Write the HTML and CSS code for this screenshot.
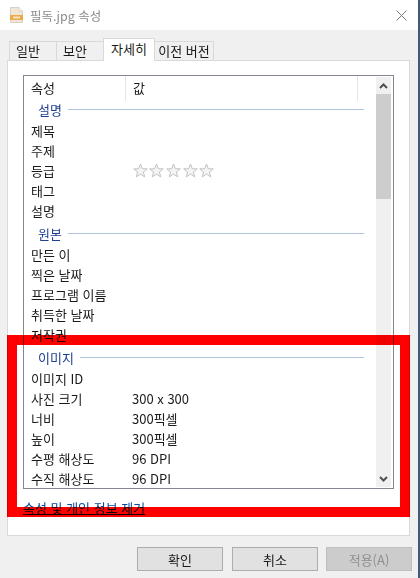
FILE: index.html
```html
<!DOCTYPE html>
<html lang="ko">
<head>
    <meta charset="UTF-8">
    <meta name="viewport" content="width=device-width, initial-scale=1.0">
    <title>필독.jpg 속성</title>
    <link rel="stylesheet" href="styles.css">
</head>
<body>
    <div class="window">
        <header class="titlebar">
            <svg class="file-icon" width="15" height="16" viewBox="0 0 15 16">
                <path d="M1.5 .5H10L13.5 4V15.5H1.5Z" fill="#f1e6d6" stroke="#d9cfc2"/>
                <path d="M10 .5V4H13.5" fill="#fff" stroke="#d9cfc2"/>
                <rect x="1" y="8" width="13" height="5" fill="#eba94a"/>
                <rect x="4" y="9.5" width="7" height="2" fill="#f8e3c0"/>
            </svg>
            <span class="title">필독.jpg 속성</span>
            <svg class="close" width="11" height="11" viewBox="0 0 11 11">
                <path d="M.5 .5L10.5 10.5M10.5 .5L.5 10.5" stroke="#7a7a7a" fill="none"/>
            </svg>
        </header>

        <nav class="tabs">
            <div class="tab short">일반</div>
            <div class="tab short">보안</div>
            <div class="tab active">자세히</div>
            <div class="tab">이전 버전</div>
        </nav>

        <section class="panel">
            <div class="list">
                <div class="rows">
                    <div class="head">
                        <div class="col-name">속성</div>
                        <div class="col-value">값</div>
                    </div>

                    <div class="group"><span>설명</span></div>
                    <div class="row"><div class="col-name">제목</div></div>
                    <div class="row"><div class="col-name">주제</div></div>
                    <div class="row">
                        <div class="col-name">등급</div>
                        <div class="stars">
                            <svg width="15" height="15" viewBox="0 0 15 15"><path class="star" d="M7.5 1L9.3 5.7L14.3 5.9L10.4 9L11.7 13.9L7.5 11.1L3.3 13.9L4.6 9L.7 5.9L5.7 5.7Z"/></svg>
                            <svg width="15" height="15" viewBox="0 0 15 15"><path class="star" d="M7.5 1L9.3 5.7L14.3 5.9L10.4 9L11.7 13.9L7.5 11.1L3.3 13.9L4.6 9L.7 5.9L5.7 5.7Z"/></svg>
                            <svg width="15" height="15" viewBox="0 0 15 15"><path class="star" d="M7.5 1L9.3 5.7L14.3 5.9L10.4 9L11.7 13.9L7.5 11.1L3.3 13.9L4.6 9L.7 5.9L5.7 5.7Z"/></svg>
                            <svg width="15" height="15" viewBox="0 0 15 15"><path class="star" d="M7.5 1L9.3 5.7L14.3 5.9L10.4 9L11.7 13.9L7.5 11.1L3.3 13.9L4.6 9L.7 5.9L5.7 5.7Z"/></svg>
                            <svg width="15" height="15" viewBox="0 0 15 15"><path class="star" d="M7.5 1L9.3 5.7L14.3 5.9L10.4 9L11.7 13.9L7.5 11.1L3.3 13.9L4.6 9L.7 5.9L5.7 5.7Z"/></svg>
                        </div>
                    </div>
                    <div class="row"><div class="col-name">태그</div></div>
                    <div class="row"><div class="col-name">설명</div></div>

                    <div class="group"><span>원본</span></div>
                    <div class="row"><div class="col-name">만든 이</div></div>
                    <div class="row"><div class="col-name">찍은 날짜</div></div>
                    <div class="row"><div class="col-name">프로그램 이름</div></div>
                    <div class="row"><div class="col-name">취득한 날짜</div></div>
                    <div class="row"><div class="col-name">저작권</div></div>

                    <div class="group"><span>이미지</span></div>
                    <div class="row"><div class="col-name">이미지 ID</div></div>
                    <div class="row"><div class="col-name">사진 크기</div><div class="col-value">300 x 300</div></div>
                    <div class="row"><div class="col-name">너비</div><div class="col-value">300픽셀</div></div>
                    <div class="row"><div class="col-name">높이</div><div class="col-value">300픽셀</div></div>
                    <div class="row"><div class="col-name">수평 해상도</div><div class="col-value">96 DPI</div></div>
                    <div class="row"><div class="col-name">수직 해상도</div><div class="col-value">96 DPI</div></div>
                </div>
                <div class="scrollbar">
                    <div class="arrow">
                        <svg width="9" height="6" viewBox="0 0 9 6"><path d="M1 5L4.5 1.5L8 5" fill="none" stroke="#505050" stroke-width="2"/></svg>
                    </div>
                    <div class="thumb"></div>
                    <div class="track"></div>
                    <div class="arrow">
                        <svg width="9" height="6" viewBox="0 0 9 6"><path d="M1 1L4.5 4.5L8 1" fill="none" stroke="#505050" stroke-width="2"/></svg>
                    </div>
                </div>
            </div>
            <a class="remove-link" href="#">속성 및 개인 정보 제거</a>
        </section>

        <footer class="buttons">
            <button class="btn">확인</button>
            <button class="btn">취소</button>
            <button class="btn disabled">적용(A)</button>
        </footer>

        <div class="highlight"></div>
    </div>
</body>
</html>
```

FILE: styles.css
```css
html, body {
    margin: 0;
    padding: 0;
}
body {
    font-family: "Noto Sans CJK KR", "Noto Sans", sans-serif;
    font-size: 13px;
    color: #1a1a1a;
    overflow: hidden;
}
.window {
    position: relative;
    width: 418px;
    height: 578px;
    background-color: #f0f0f0;
    border-right: 2px solid #3d5a78;
}
.titlebar {
    display: flex;
    align-items: center;
    height: 30px;
    padding: 0 8px 0 9px;
    background-color: #fff;
}
.file-icon {
    margin-right: 6px;
}
.title {
    flex: 1;
    color: #8c8c8c;
    font-size: 12.5px;
}
.close {
    margin-right: 3px;
}
.tabs {
    display: flex;
    height: 21px;
    margin-top: 9px;
    padding-left: 9px;
    align-items: flex-end;
}
.tab {
    box-sizing: border-box;
    display: flex;
    align-items: center;
    justify-content: center;
    height: 19px;
    width: 48px;
    padding-bottom: 2px;
    background-color: #f0f0f0;
    border: 1px solid #d9d9d9;
    border-bottom: none;
    margin-right: -1px;
}
.tab.short {
    padding-right: 10px;
}
.tab:last-child {
    width: 60px;
}
.tab.active {
    height: 23px;
    width: 52px;
    background-color: #fff;
    z-index: 1;
    margin-bottom: -1px;
    padding-bottom: 4px;
}
.panel {
    box-sizing: border-box;
    width: 403px;
    height: 476px;
    margin-left: 7px;
    padding: 14px 15px 0;
    background-color: #fff;
    border: 1px solid #d9d9d9;
}
.list {
    box-sizing: border-box;
    display: flex;
    width: 371px;
    height: 414px;
    border: 1px solid #828790;
    overflow: hidden;
}
.rows {
    flex: 1;
    min-width: 0;
}
.head, .row {
    display: flex;
    align-items: center;
    height: 20px;
}
.head {
    height: 25px;
    margin-bottom: -5px;
    align-items: flex-start;
}
.head .col-name, .head .col-value {
    height: 25px;
    line-height: 24px;
}
.head .col-value {
    flex: 0 0 233px;
    border-left: 1px solid #e5e5e5;
    border-right: 1px solid #e5e5e5;
    box-sizing: border-box;
    padding-left: 7px;
}
.col-name {
    box-sizing: border-box;
    flex: 0 0 101px;
    padding-left: 7px;
    white-space: nowrap;
}
.col-value {
    padding-left: 7px;
    white-space: nowrap;
}
.stars {
    display: flex;
    gap: 1.7px;
    padding-left: 7.5px;
}
.star {
    fill: #f4f4f4;
    stroke: #c2c2c2;
}
.group {
    box-sizing: border-box;
    display: flex;
    align-items: center;
    height: 24px;
    padding: 2px 12px 0 14px;
    color: #1f3f8f;
}
.group span {
    margin-right: 6px;
}
.group::after {
    content: "";
    flex: 1;
    height: 1px;
    background-color: #b0c4de;
}
.scrollbar {
    display: flex;
    flex-direction: column;
    flex: 0 0 15px;
    margin: 1px 2px 1px 0;
    background-color: #f0f0f0;
}
.arrow {
    display: flex;
    align-items: center;
    justify-content: center;
    height: 17px;
}
.thumb {
    height: 105px;
    background-color: #cdcdcd;
}
.track {
    flex: 1;
}
.remove-link {
    display: block;
    width: max-content;
    margin-top: 11px;
    color: #0b4a9e;
    text-decoration: underline;
    line-height: 16px;
}
.buttons {
    display: flex;
    justify-content: flex-end;
    gap: 8px;
    padding: 11px 6px 0 0;
}
.btn {
    box-sizing: border-box;
    width: 86px;
    height: 24px;
    padding: 0;
    font-family: inherit;
    font-size: 13px;
    color: #1a1a1a;
    background-color: #e1e1e1;
    border: 1px solid #adadad;
}
.btn:first-child {
    margin-right: 1px;
}
.btn.disabled {
    color: #8f8f8f;
    background-color: #cccccc;
    border-color: #bfbfbf;
}
/* 빨간 표시: 아래 글자가 비치도록 곱하기로 겹침 */
.highlight {
    position: absolute;
    left: 7px;
    top: 335px;
    width: 383px;
    height: 162px;
    border: 10px solid #ff0000;
    mix-blend-mode: multiply;
}
```
